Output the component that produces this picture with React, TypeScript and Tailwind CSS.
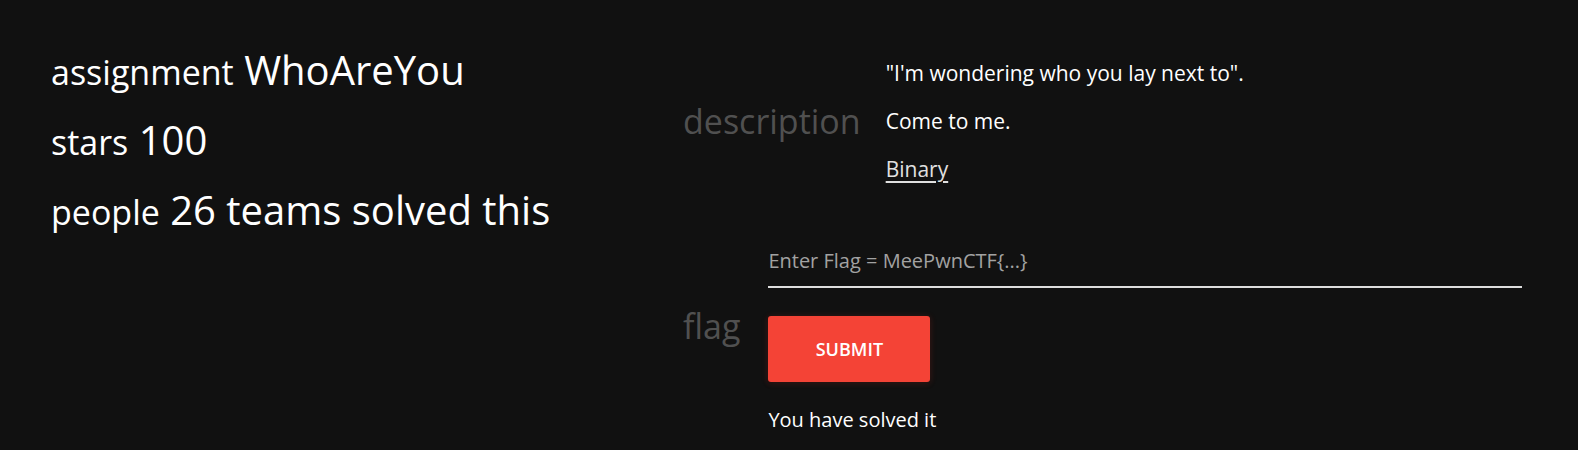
const FONT = "font-['Open_Sans',_'Noto_Sans',_sans-serif]"

const STATS = [
  { label: 'assignment', value: 'WhoAreYou' },
  { label: 'stars', value: '100' },
  { label: 'people', value: '26 teams solved this' },
]

export default function App() {
  return (
    <div className={`${FONT} flex min-h-[450px] w-full bg-[#111111] pl-[51px] pr-[56px] text-white`}>
      {/* Challenge info */}
      <div className="flex w-[632px] shrink-0 flex-col pt-[35px]">
        {STATS.map((s) => (
          <div key={s.label} className="text-[40px] leading-[70px] whitespace-nowrap">
            <span className="text-[34px] leading-none">{s.label}</span> {s.value}
          </div>
        ))}
      </div>

      <div className="flex flex-1 flex-col pt-[49px]">
        {/* Description */}
        <div className="flex items-center gap-[25px]">
          <div className="text-[34px] text-[#505050]">description</div>
          <div className="flex flex-col text-[21px] leading-[48px]">
            <p>"I'm wondering who you lay next to".</p>
            <p>Come to me.</p>
            <p>
              <a href="#" className="text-[#e0e0e0] underline underline-offset-[4px]">
                Binary
              </a>
            </p>
          </div>
        </div>

        {/* Flag form */}
        <div className="mt-[25px] flex items-center gap-[28px]">
          <div className="text-[34px] text-[#505050]">flag</div>
          <div className="flex flex-1 flex-col pt-4">
            <input
              type="text"
              placeholder="Enter Flag = MeePwnCTF{...}"
              className="h-[54px] w-full border-b-2 border-[#dddddd] bg-transparent text-[20px] text-white outline-none placeholder:text-[#a2a2a2]"
            />
            <button className="mt-[28px] h-[66px] w-[162px] rounded-[3px] bg-[#f44336] text-[18px] font-semibold text-white shadow-[0_2px_5px_rgba(0,0,0,0.3),0_1px_6px_rgba(244,67,54,0.25)]">
              SUBMIT
            </button>
            <p className="mt-[24px] text-[20px] leading-[28px]">You have solved it</p>
          </div>
        </div>
      </div>
    </div>
  )
}
